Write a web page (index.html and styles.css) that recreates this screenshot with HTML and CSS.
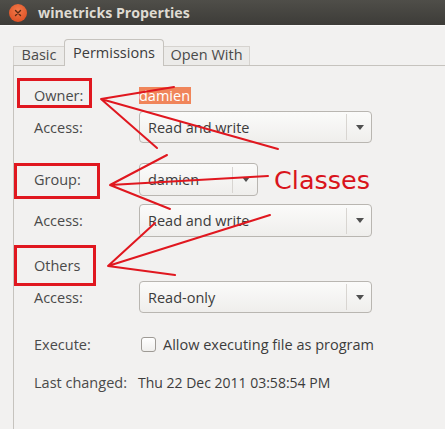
FILE: index.html
```html
<!DOCTYPE html>
<html>
<head>
<meta charset="utf-8">
<link rel="stylesheet" href="styles.css">
</head>
<body>
<div class="window">
  <div class="titlebar">
    <span class="close">
      <svg width="18" height="18" viewBox="0 0 18 18"><path d="M6.5 6.5 L11.5 11.5 M11.5 6.5 L6.5 11.5" stroke="#5a2a14" stroke-width="1.4" stroke-linecap="round"/></svg>
    </span>
    <span class="title">winetricks Properties</span>
  </div>
  <div class="content">
    <div class="tabs">
      <div class="tab tab-basic">Basic</div>
      <div class="tab tab-active">Permissions</div>
      <div class="tab tab-open">Open With</div>
    </div>
    <div class="frame">
      <div class="row row-owner"><span class="label">Owner:</span><span class="sel">damien</span></div>
      <div class="row row-access1"><span class="label">Access:</span>
        <div class="combo"><span class="combo-text">Read and write</span><span class="combo-btn"><span class="arrow"></span></span></div>
      </div>
      <div class="row row-group"><span class="label">Group:</span>
        <div class="combo combo-small"><span class="combo-text">damien</span><span class="combo-btn"><span class="arrow"></span></span></div>
      </div>
      <div class="row row-access2"><span class="label">Access:</span>
        <div class="combo"><span class="combo-text">Read and write</span><span class="combo-btn"><span class="arrow"></span></span></div>
      </div>
      <div class="row row-others"><span class="label">Others</span></div>
      <div class="row row-access3"><span class="label">Access:</span>
        <div class="combo"><span class="combo-text">Read-only</span><span class="combo-btn"><span class="arrow"></span></span></div>
      </div>
      <div class="row row-exec"><span class="label">Execute:</span>
        <span class="check"></span><span class="check-label">Allow executing file as program</span>
      </div>
      <div class="row row-last"><span class="label">Last changed:</span><span class="value date">Thu 22 Dec 2011 03:58:54 PM</span></div>
    </div>
  </div>
  <svg class="annot" width="445" height="429" viewBox="0 0 445 429">
    <g fill="none" stroke="#e0171f" stroke-width="3">
      <rect x="18.5" y="79.5" width="72" height="27"/>
      <rect x="15.5" y="164.5" width="83" height="33"/>
      <rect x="15.5" y="246.5" width="79" height="38"/>
    </g>
    <g fill="none" stroke="#e0171f" stroke-width="2" stroke-linecap="round">
      <path d="M174 87 L101 99 L278 149 M101 99 L157 148"/>
      <path d="M167 155 L110 185 L268 176 M110 185 L170 209"/>
      <path d="M155 223 L108 266 L270 215 M108 266 L175 275"/>
    </g>
  </svg>
  <span class="classes">Classes</span>
</div>
</body>
</html>
```

FILE: styles.css
```css
html, body {
  margin: 0;
  padding: 0;
}
body {
  width: 445px;
  height: 429px;
  overflow: hidden;
  background: #f2f1f0;
  font-family: "Open Sans", "Noto Sans", sans-serif;
  font-size: 14.5px;
  color: #3c3c3c;
}
.window {
  position: relative;
  width: 445px;
  height: 429px;
  overflow: hidden;
  background: #f2f1f0;
}
.titlebar {
  height: 25px;
  display: flex;
  align-items: center;
  background: linear-gradient(#4f4e49, #3d3c38);
  border-bottom: 1px solid #faf9f8;
}
.close {
  width: 18px;
  height: 18px;
  margin-left: 9px;
  border-radius: 50%;
  background: radial-gradient(circle at 50% 35%, #f27a4a, #d9471c);
  display: flex;
}
.title {
  margin-left: 11px;
  font-weight: bold;
  font-size: 14.2px;
  color: #dfdbd2;
}
.content {
  padding-left: 13px;
}
.tabs {
  margin-top: 13px;
  height: 26px;
  display: flex;
  align-items: flex-end;
  position: relative;
  z-index: 1;
}
.tab {
  box-sizing: border-box;
  height: 19px;
  display: flex;
  align-items: center;
  justify-content: center;
  color: #4a4a4a;
  background: #ecebe9;
  border-top: 1px solid #d6d3cf;
  border-left: 1px solid #d6d3cf;
  padding-bottom: 4px;
}
.tab-basic {
  width: 51px;
}
.tab-active {
  width: 100px;
  height: 27px;
  margin-bottom: -1px;
  background: #f2f1f0;
  border: 1px solid #c6c3be;
  border-bottom: none;
  border-radius: 4px 4px 0 0;
  color: #3c3c3c;
  padding-bottom: 1px;
}
.tab-open {
  width: 86px;
  border-left: none;
  border-right: 1px solid #d6d3cf;
}
.frame {
  border-top: 1px solid #c6c3be;
  border-left: 1px solid #c6c3be;
  height: 400px;
  padding-left: 20px;
  display: flex;
  flex-direction: column;
}
.row {
  display: flex;
  align-items: center;
}
.label {
  width: 105px;
  flex: none;
  color: #4a4a4a;
}
.row-owner { height: 22px; margin-top: 18px; }
.row-access1 { height: 32px; margin-top: 5px; }
.row-group { height: 33px; margin-top: 20px; }
.row-access2 { height: 33px; margin-top: 8px; }
.row-others { height: 22px; margin-top: 17px; }
.row-access3 { height: 32px; margin-top: 5px; }
.row-exec { height: 22px; margin-top: 20px; }
.row-last { height: 22px; margin-top: 16px; }
.sel {
  background: #f0855a;
  color: #ffffff;
  line-height: 17px;
  padding: 0 1px 0 0;
}
.combo {
  box-sizing: border-box;
  width: 233px;
  height: 100%;
  border: 1px solid #b9b6b1;
  border-radius: 4px;
  background: linear-gradient(#fbfbfa, #efeeec);
  display: flex;
  align-items: center;
}
.combo-small {
  width: 119px;
}
.combo-text {
  flex: 1;
  padding-left: 8px;
  white-space: nowrap;
}
.combo-btn {
  width: 24px;
  height: 26px;
  border-left: 1px solid #d8d5d1;
  display: flex;
  align-items: center;
  justify-content: center;
}
.arrow {
  width: 0;
  height: 0;
  border-left: 4px solid transparent;
  border-right: 4px solid transparent;
  border-top: 5px solid #505050;
  margin-left: 1px;
}
.check {
  box-sizing: border-box;
  width: 15px;
  height: 15px;
  margin-left: 2px;
  border: 1px solid #9e9a95;
  border-radius: 3px;
  background: linear-gradient(#ffffff, #f0efed);
  flex: none;
}
.check-label {
  margin-left: 7px;
  white-space: nowrap;
}
.value {
  white-space: nowrap;
}
.date {
  font-size: 14px;
  margin-left: -1px;
}
.annot {
  position: absolute;
  left: 0;
  top: 0;
  pointer-events: none;
}
.classes {
  position: absolute;
  left: 274px;
  top: 168px;
  font-family: "DejaVu Sans", sans-serif;
  font-size: 25.5px;
  line-height: 25px;
  color: #d9141c;
}
```
